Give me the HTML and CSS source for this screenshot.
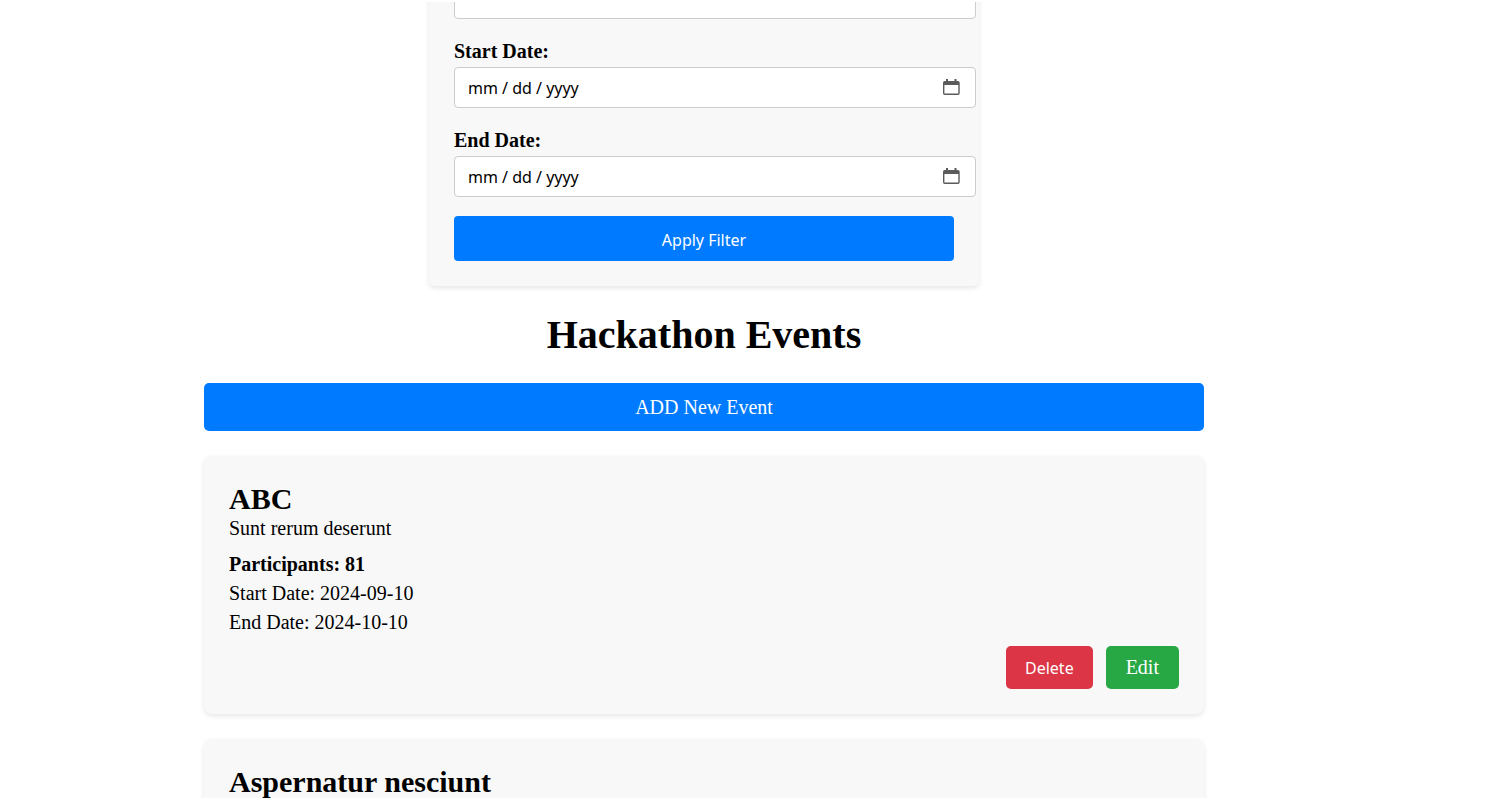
FILE: index.html
```html
<!DOCTYPE html>
<html lang="en">
<head>
<meta charset="utf-8">
<title>Hackathon Events</title>
<link rel="stylesheet" href="styles.css">
</head>
<body>
<main class="page">
  <form class="filter">
    <input class="field-input" type="text" aria-label="Search">
    <div class="field">
      <label class="field-label" for="start">Start Date:</label>
      <div class="date">
        <input class="field-input" id="start" type="text" placeholder="mm / dd / yyyy">
        <button class="date-button" type="button" aria-label="Choose start date"><svg width="18" height="18" viewBox="0 0 18 18"><path class="cal-fill" d="M4 3V1h2v2h6.500V1h2v2H16q1.700 0 1.700 1.700V15.300Q17.700 17 16 17H2.700Q1 17 1 15.300V4.700Q1 3 2.700 3zM2.400 7v8.600h13.900V7z"/></svg></button>
      </div>
    </div>
    <div class="field">
      <label class="field-label" for="end">End Date:</label>
      <div class="date">
        <input class="field-input" id="end" type="text" placeholder="mm / dd / yyyy">
        <button class="date-button" type="button" aria-label="Choose end date"><svg width="18" height="18" viewBox="0 0 18 18"><path class="cal-fill" d="M4 3V1h2v2h6.500V1h2v2H16q1.700 0 1.700 1.700V15.300Q17.700 17 16 17H2.700Q1 17 1 15.300V4.700Q1 3 2.700 3zM2.400 7v8.600h13.900V7z"/></svg></button>
      </div>
    </div>
    <button class="apply" type="button">Apply Filter</button>
  </form>
  <section class="events">
    <h1 class="title">Hackathon Events</h1>
    <a class="add" href="#">ADD New Event</a>
    <article class="card">
      <h2 class="card-title">ABC</h2>
      <p class="line">Sunt rerum deserunt</p>
      <div class="details">
        <p class="line strong">Participants: 81</p>
        <p class="line">Start Date: 2024-09-10</p>
        <p class="line">End Date: 2024-10-10</p>
      </div>
      <div class="actions">
        <button class="delete" type="button">Delete</button>
        <a class="edit" href="#">Edit</a>
      </div>
    </article>
    <article class="card">
      <h2 class="card-title">Aspernatur nesciunt</h2>
    </article>
  </section>
</main>
</body>
</html>
```
FILE: styles.css
```css
body {
  margin: 0;
  padding: 2px 0;
  box-sizing: border-box;
  height: 100vh;
  background: #fff;
  color: #000;
  font: 20px/24px "Liberation Serif", "Times New Roman", serif;
}
h1, h2, p { margin: 0; }
a { text-decoration: none; }
button { border: 0; padding: 0; }
.page {
  height: 100%;
  overflow: hidden;
  padding-right: 87px;
}
.filter {
  display: flex;
  flex-direction: column;
  gap: 19px;
  box-sizing: border-box;
  max-width: 550px;
  margin: -24px auto 0;
  padding: 0 25px 25px;
  background: #f8f8f8;
  border-radius: 5px;
  box-shadow: 0 2px 5px rgba(0, 0, 0, .1);
}
.field-input {
  display: block;
  box-sizing: border-box;
  width: calc(100% + 22px);
  height: 41px;
  padding: 0 13px;
  border: 1px solid #ccc;
  border-radius: 4px;
  background: #fff;
  font: 16px "Noto Sans", sans-serif;
}
.field-input::placeholder { color: #000; opacity: 1; }
.field-label {
  display: block;
  margin-bottom: 3px;
  line-height: 26px;
  font-weight: bold;
}
.date { position: relative; }
.date-button {
  position: absolute;
  right: -6px;
  top: 11px;
  width: 18px;
  height: 18px;
  background: none;
}
.date-button svg { display: block; }
.cal-fill { fill: #5b5b5b; }
.apply {
  height: 45px;
  padding-top: 2px;
  border-radius: 4px;
  background: #007bff;
  color: #fff;
  font: 16px "Noto Sans", sans-serif;
}
.events {
  display: flex;
  flex-direction: column;
  gap: 25px;
  max-width: 1000px;
  margin: 25px auto 0;
}
.title {
  font-size: 40px;
  line-height: 47px;
  text-align: center;
}
.add {
  padding: 12px;
  border-radius: 5px;
  background: #007bff;
  color: #fff;
  text-align: center;
}
.card {
  padding: 26px 25px 25px;
  background: #f8f8f8;
  border-radius: 8px;
  box-shadow: 0 2px 5px rgba(0, 0, 0, .1);
}
.card-title { font-size: 30px; line-height: 34px; }
.strong { font-weight: bold; }
.details {
  display: flex;
  flex-direction: column;
  gap: 5px;
  margin: 12px 0;
}
.actions {
  display: flex;
  justify-content: flex-end;
  gap: 13px;
}
.delete, .edit {
  box-sizing: border-box;
  height: 43px;
  border-radius: 5px;
  color: #fff;
}
.delete { padding: 0 19px; background: #dc3545; font: 16px "Noto Sans", sans-serif; }
.edit { padding: 0 20px; background: #28a745; line-height: 43px; }
```
